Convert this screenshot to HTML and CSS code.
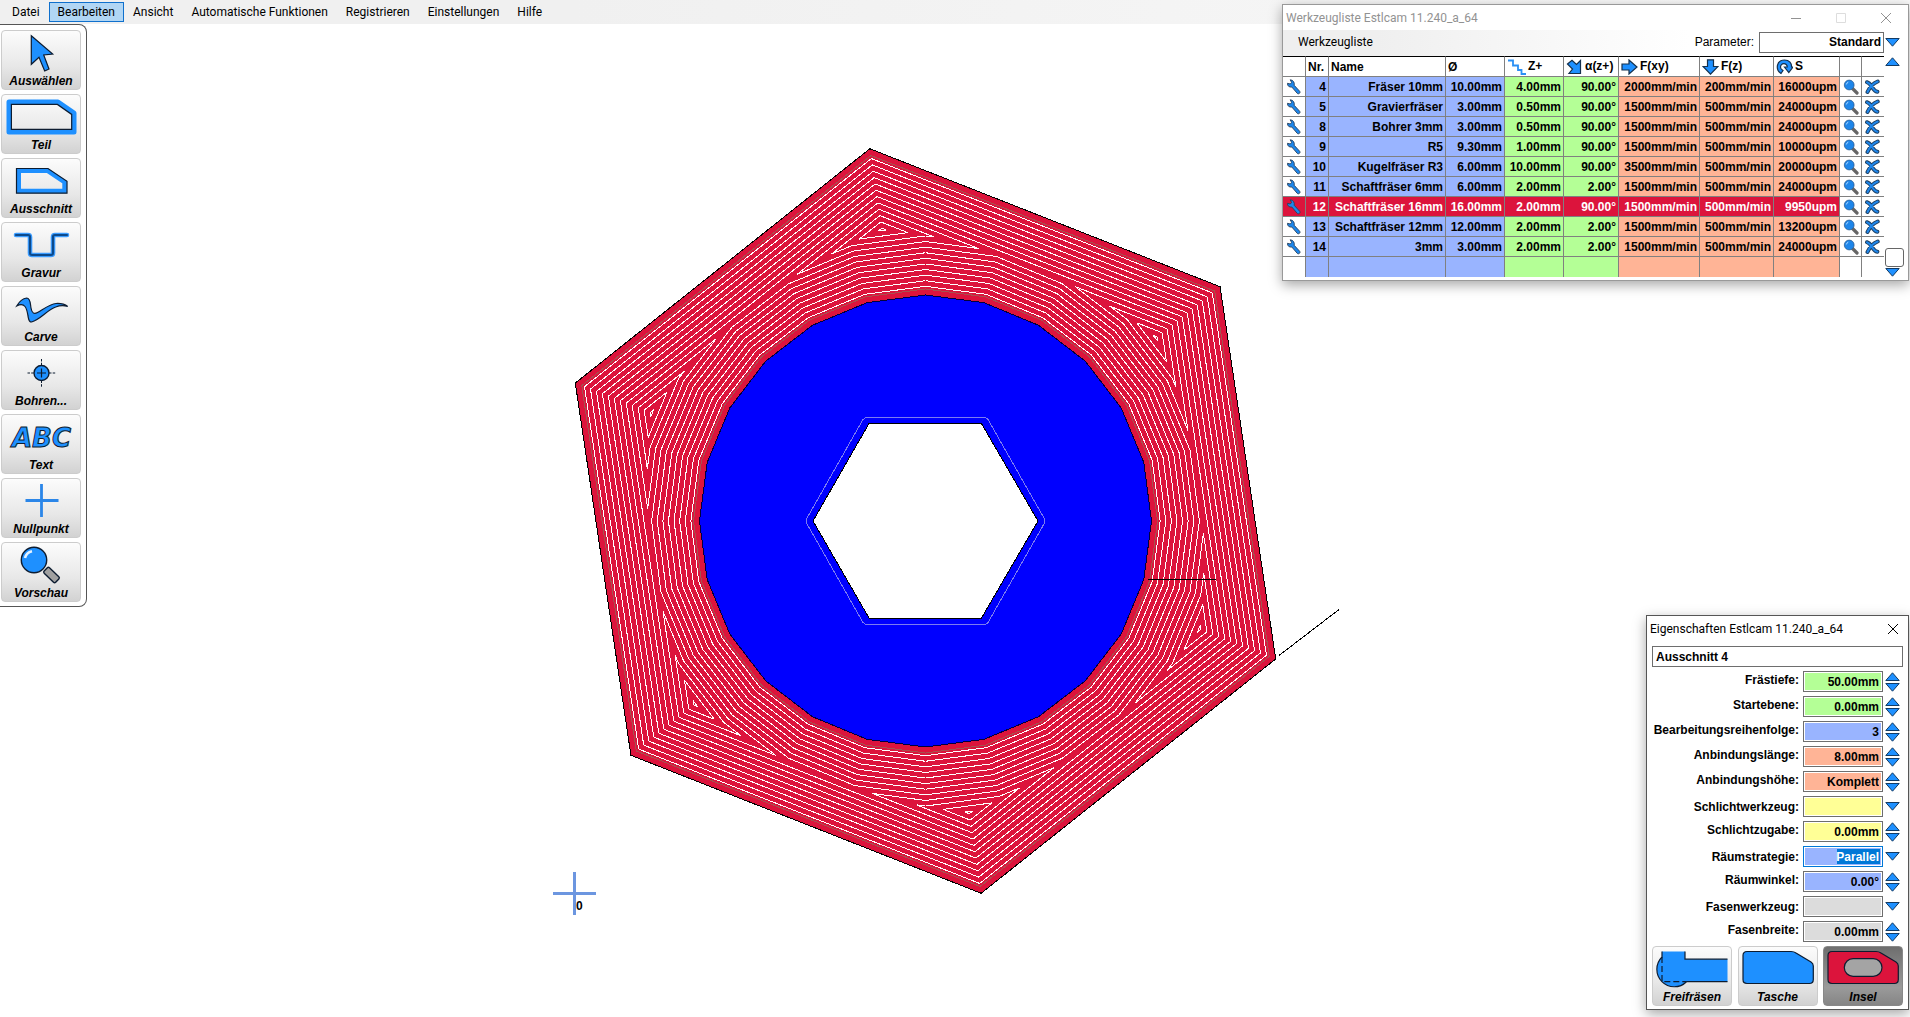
FILE: index.html
```html
<!DOCTYPE html>
<html lang="de">
<head>
<meta charset="utf-8">
<title>Estlcam</title>
<link rel="stylesheet" href="styles.css">
</head>
<body>
<svg class="sprites" aria-hidden="true">
  <symbol id="up" viewBox="0 0 15 9"><path d="M.8 8.5 7.5.8l6.7 7.7z" fill="#1e90ff" stroke="#123a63"/></symbol>
  <symbol id="down" viewBox="0 0 15 9"><path d="M.8.5l6.7 7.7L14.200.5z" fill="#1e90ff" stroke="#123a63"/></symbol>
  <symbol id="wrench" viewBox="0 0 16 16"><path d="M4.200.8 5.600 3.400 4.300 5 1.500 4.300C1.200 6.900 3.400 8.500 5.800 8l5.400 6.300c1.300 1.400 3.700-.4 2.500-2L8.200 6.300C8.800 3.600 7.200.9 4.200.8z" fill="#1e86ea" stroke="#28415c" stroke-width=".9"/></symbol>
  <symbol id="lens" viewBox="0 0 16 16"><path d="M9.500 9.500l4.500 4.500" stroke="#666" stroke-width="3.200" stroke-linecap="round"/><circle cx="6.200" cy="6" r="4.900" fill="#1e86ea" stroke="#2d5f94" stroke-width=".8"/><path d="M3.300 5.500a3 3 0 0 1 2-2.300" fill="none" stroke="#a9d5ff"/></symbol>
  <symbol id="cross" viewBox="0 0 16 16"><g fill="none" stroke-linecap="round"><path d="M2 3.200c2 .6 3 1.800 4.400 3.800 1.500 2.600 3.300 5.400 6 5.800M12.700 2.500C8.700 4 4.700 8 2.500 13" stroke="#1d3d5e" stroke-width="4"/><path d="M2 3.200c2 .6 3 1.800 4.400 3.800 1.500 2.600 3.300 5.400 6 5.800M12.700 2.500C8.700 4 4.700 8 2.500 13" stroke="#1e86ea" stroke-width="2"/></g></symbol>
  <symbol id="steps" viewBox="0 0 20 16"><path d="M1 1.500h5v5h5v4.500h3.500v4H19" fill="none" stroke="#2b90f5" stroke-width="1.800"/></symbol>
  <symbol id="arrow-r" viewBox="0 0 17 16"><path d="M1 5h7V1l8 7-8 7v-4H1z" fill="#1e90ff" stroke="#14304d" stroke-width="1.200"/></symbol>
  <symbol id="arrow-d" viewBox="0 0 17 16"><path d="M5.500.8h6V7.500h4.500l-7.500 7.700L1 7.500h4.500z" fill="#1e90ff" stroke="#14304d" stroke-width="1.200"/></symbol>
  <symbol id="arrow-se" viewBox="0 0 17 16"><path d="M1.500 5 6 1.200l4.500 4.300L14.500 1.500V14.500H3L6.500 10z" fill="#1e90ff" stroke="#14304d" stroke-width="1.200"/></symbol>
  <symbol id="rotate" viewBox="0 0 17 16"><path d="M5 14.500C-1 10.500.5 1 8.500 1c5 0 7.300 3.500 7 7H17l-4.200 5.500L8.500 8h2.800c0-4.500-7-4.500-6.800.3C4.600 10.500 6 11 7 11.500z" fill="#1e90ff" stroke="#14304d" stroke-width="1.200"/></symbol>
</svg>

<nav class="menubar" aria-label="Hauptmenü">
  <button>Datei</button><button class="active">Bearbeiten</button><button>Ansicht</button><button>Automatische Funktionen</button><button>Registrieren</button><button>Einstellungen</button><button>Hilfe</button>
</nav>

<main class="workspace">
  <svg class="drawing" viewBox="0 24 1910 993" preserveAspectRatio="xMinYMin meet" role="img" aria-label="Werkstück mit Fräsbahnen">
    <g id="part" shape-rendering="crispEdges"></g>
    <polygon points="869,423.500 981.500,423.500 1038,521 981.500,618 869,618 813,521" fill="#fff" stroke="#000" shape-rendering="crispEdges"/>
    <polygon points="866,417.500 985.500,417.500 988,419.500 1044.500,519 1044.500,523 988,622.500 985.500,624.500 866,624.500 863,622.500 806.500,523 806.500,519 863,419.500" fill="none" stroke="#7c7cf0" shape-rendering="crispEdges"/>
    <path d="M1148 579.500h68M1279 655.500l60-46" stroke="#000" shape-rendering="crispEdges"/>
    <path d="M553 893.500h43M574.500 872v43" stroke="#6c96e0" stroke-width="3"/>
    <text x="576" y="910" class="origin">0</text>
  </svg>

  <aside class="toolbar" aria-label="Werkzeuge">
    <button class="tool"><svg viewBox="1 1 78 42"><path d="M30.300 5.700 51.700 24l-9 1L48 39l-4.300 2L38 27.300l-7.700 7z" fill="#1e90ff" stroke="#0d1c30" stroke-width="1.200"/></svg><span>Auswählen</span></button>
    <button class="tool"><svg viewBox="1 1 78 42"><path d="M8 8h49l16 11v19H8z" fill="none" stroke="#1e90ff" stroke-width="5" stroke-linejoin="round"/><path d="M10.400 10.400h46l14.300 10v15H10.400z" fill="none" stroke="#0d1c30" stroke-width="1.200"/></svg><span>Teil</span></button>
    <button class="tool"><svg viewBox="1 1 78 42"><path d="M17.700 12.700h28.700l17.200 11.500v8.800H17.700z" fill="none" stroke="#1e90ff" stroke-width="4.600"/><path d="M15.500 10.500H47l19 12.700v12H15.500z" fill="none" stroke="#0d1c30" stroke-width="1.200"/></svg><span>Ausschnitt</span></button>
    <button class="tool"><svg viewBox="1 1 78 42"><g fill="none" stroke-linecap="round"><path d="M15 13h12q2 0 2 2v16q0 2 2 2h19q2 0 2-2V15q0-2 2-2h12" stroke="#3b9cff" stroke-width="4.600"/><path d="M15 13h12q2 0 2 2v16q0 2 2 2h19q2 0 2-2V15q0-2 2-2h12" stroke="#0c4a8c" stroke-width="2.200"/></g></svg><span>Gravur</span></button>
    <button class="tool"><svg viewBox="1 1 78 42"><path d="M15.700 20C18 16 21.500 12.500 25.700 12c4 0 3.500 6 4.300 10 .8 5 3 6.500 6.500 4.500C42 23.500 49 18 55 17.500c5-.3 9 .8 11.700 3-4-1.200-8-1-12 .5C46 24 40 33 30.500 36c-3 0-3-4-3.500-6-.5-3-1-7-3-9.500-2-2.500-5.300-2-8.300-.5z" fill="#1e90ff" stroke="#0d1c30" stroke-width="1.200"/></svg><span>Carve</span></button>
    <button class="tool"><svg viewBox="1 1 78 42"><circle cx="40.500" cy="23" r="7.500" fill="#1e90ff" stroke="#0d1c30" stroke-width="1.400"/><path d="M36 23h9M40.500 18.500v9" stroke="#0d1c30" stroke-width="1.200"/><path d="M26.500 23h6.500M48 23h6.500M40.500 9v6.500M40.500 30.500V37" stroke="#0d1c30" stroke-dasharray="2.500 1.200"/></svg><span>Bohren...</span></button>
    <button class="tool"><svg viewBox="1 1 78 42"><text x="11" y="33" class="abc">ABC</text></svg><span>Text</span></button>
    <button class="tool"><svg viewBox="1 1 78 42"><path d="M24.500 22.500h33M40.500 6v33" stroke="#2b86e8" stroke-width="2.800"/></svg><span>Nullpunkt</span></button>
    <button class="tool"><svg viewBox="1 1 78 42"><circle cx="33" cy="18" r="12.700" fill="#1e90ff" stroke="#0d1c30" stroke-width="1.400"/><path d="M24 16c.8-3.500 3-5.800 7-6.800" fill="none" stroke="#e4f2ff" stroke-width="2.600"/><rect x="42.500" y="29.200" width="16" height="7.600" rx="1.500" transform="rotate(44 50.500 33)" fill="#a0a0a0" stroke="#0d1c30" stroke-width="1.400"/></svg><span>Vorschau</span></button>
  </aside>
</main>

<section class="window tools" aria-label="Werkzeugliste">
  <header class="titlebar inactive">
    <h2>Werkzeugliste Estlcam 11.240_a_64</h2>
    <div class="winbuttons">
      <button aria-label="Minimieren"><svg viewBox="0 0 12 12"><path d="M1 6.500h10" /></svg></button>
      <button aria-label="Maximieren" class="faint"><svg viewBox="0 0 12 12"><path d="M1.500 1.500h9v9h-9z"/></svg></button>
      <button aria-label="Schließen"><svg viewBox="0 0 12 12"><path d="M1 1l10 10M11 1L1 11"/></svg></button>
    </div>
  </header>
  <div class="listbar">
    <button class="listmenu">Werkzeugliste</button>
    <label for="param">Parameter:</label>
    <select id="param"><option>Standard</option></select>
    <svg class="tri"><use href="#down"/></svg>
  </div>
  <div class="listbody">
    <table>
      <colgroup><col class="c23"><col class="c23"><col><col class="c59"><col class="c59"><col class="c55"><col class="c81"><col class="c74"><col class="c66"><col class="c22"><col class="c22"></colgroup>
      <thead><tr><th></th><th>Nr.</th><th>Name</th><th>Ø</th>
        <th><svg class="wide"><use href="#steps"/></svg>Z+</th><th><svg><use href="#arrow-se"/></svg>α(z+)</th><th><svg><use href="#arrow-r"/></svg>F(xy)</th><th><svg><use href="#arrow-d"/></svg>F(z)</th><th><svg><use href="#rotate"/></svg>S</th><th></th><th></th></tr></thead>
      <tbody id="rows"></tbody>
    </table>
    <div class="scroll">
      <button aria-label="Nach oben"><svg class="tri"><use href="#up"/></svg></button>
      <span class="thumb"></span>
      <button aria-label="Nach unten"><svg class="tri"><use href="#down"/></svg></button>
    </div>
  </div>
</section>

<section class="window props" aria-label="Eigenschaften">
  <header class="titlebar">
    <h2>Eigenschaften Estlcam 11.240_a_64</h2>
    <div class="winbuttons"><button aria-label="Schließen"><svg viewBox="0 0 12 12"><path d="M1 1l10 10M11 1L1 11"/></svg></button></div>
  </header>
  <form class="form">
    <input class="name" type="text" value="Ausschnitt 4" aria-label="Name">
    <div class="field"><label for="f1">Frästiefe:</label><input id="f1" class="green" value="50.00mm"><span class="spin"></span></div>
    <div class="field"><label for="f2">Startebene:</label><input id="f2" class="green" value="0.00mm"><span class="spin"></span></div>
    <div class="field"><label for="f3">Bearbeitungsreihenfolge:</label><input id="f3" class="blue" value="3"><span class="spin"></span></div>
    <div class="field"><label for="f4">Anbindungslänge:</label><input id="f4" class="orange" value="8.00mm"><span class="spin"></span></div>
    <div class="field"><label for="f5">Anbindungshöhe:</label><input id="f5" class="orange" value="Komplett"><span class="spin"></span></div>
    <div class="field combo"><label for="f6">Schlichtwerkzeug:</label><select id="f6" class="yellow"><option></option></select><svg class="tri"><use href="#down"/></svg></div>
    <div class="field"><label for="f7">Schlichtzugabe:</label><input id="f7" class="yellow" value="0.00mm"><span class="spin"></span></div>
    <div class="field combo"><label for="f8">Räumstrategie:</label><select id="f8" class="chosen"><option>Parallel</option></select><svg class="tri"><use href="#down"/></svg></div>
    <div class="field"><label for="f9">Räumwinkel:</label><input id="f9" class="blue" value="0.00°"><span class="spin"></span></div>
    <div class="field combo"><label for="f10">Fasenwerkzeug:</label><select id="f10" class="gray"><option></option></select><svg class="tri"><use href="#down"/></svg></div>
    <div class="field"><label for="f11">Fasenbreite:</label><input id="f11" class="gray" value="0.00mm"><span class="spin"></span></div>
    <div class="modes">
      <button type="button" class="tool"><svg viewBox="1 1 78 42"><path d="M10 5.500h23v7.700h42.500v22.500H34.500A17 17 0 1 1 10 11z" fill="#1e90ff"/><path d="M75.500 13.200H33V5.500M10 5.500V11A17 17 0 1 0 34.500 35.700h41" fill="none" stroke="#0d1c30" stroke-width="1.200"/><path d="M10 11v24.700h24" fill="none" stroke="#0d1c30" stroke-width="1.200" stroke-dasharray="6 3"/></svg><span>Freifräsen</span></button>
      <button type="button" class="tool"><svg viewBox="1 1 78 42"><path d="M9 5.500h44q3 0 5 1.500l15 9q2.300 1.500 2.300 4V33.500q0 4-4 4H9q-4 0-4-4v-24q0-4 4-4z" fill="#1e90ff" stroke="#0d1c30" stroke-width="1.200"/></svg><span>Tasche</span></button>
      <button type="button" class="tool pressed"><svg viewBox="1 1 78 42"><path d="M9 5.500h44q3 0 5 1.500l15 9q2.300 1.500 2.300 4V33.500q0 4-4 4H9q-4 0-4-4v-24q0-4 4-4z" fill="#dc143c" stroke="#0d1c30" stroke-width="1.200"/><rect x="21.300" y="12.700" width="37.700" height="17.600" rx="8.800" fill="#a4a4a4" stroke="#0d1c30" stroke-width="1.200"/></svg><span>Insel</span></button>
    </div>
  </form>
</section>
<script src="app.js"></script>
</body>
</html>
```
FILE: styles.css
```css
* { box-sizing: border-box; }
html, body { height: 100%; margin: 0; }
body {
  display: flex;
  flex-direction: column;
  overflow: hidden;
  position: relative;
  background: #fff;
  color: #000;
  font: bold 12px/14px "Liberation Sans", Arial, sans-serif;
}
button {
  margin: 0;
  padding: 0;
  border: 0;
  background: none;
  color: inherit;
  font: inherit;
}
svg { display: block; }
.sprites { position: absolute; width: 0; height: 0; }

.menubar {
  display: flex;
  align-items: center;
  height: 24px;
  padding-left: 3px;
  background: linear-gradient(90deg, #f0f0f0 30%, #f9f9f9);
}
.menubar button {
  height: 20px;
  padding: 0 8px;
  border: 1px solid transparent;
  font: 12px/18px Roboto, "Segoe UI", sans-serif;
}
.menubar .active { background: #b1d6f4; border-color: #0f70cd; }

.workspace { flex: 1; position: relative; min-height: 0; }
.drawing { position: absolute; top: 0; left: 0; width: 100%; height: 100%; }
.origin { font: bold 12px "Liberation Sans", Arial, sans-serif; }

.toolbar {
  position: relative;
  display: flex;
  flex-direction: column;
  gap: 4px;
  width: 87px;
  padding: 5px 5px 4px 1px;
  background: #fff;
  border: 1px solid #555;
  border-left: 0;
  border-radius: 0 8px 8px 0;
}
.tool {
  display: flex;
  flex-direction: column;
  align-items: center;
  width: 80px;
  height: 60px;
  border: 1px solid #ccc;
  border-radius: 4px;
  background: linear-gradient(#fcfcfc, #e8e8e8 60%, #d2d2d2);
  font-style: italic;
  line-height: 16px;
}
.tool svg { width: 78px; height: 42px; }
.abc {
  font: italic bold 26px "DejaVu Sans", sans-serif;
  fill: #1e90ff;
  stroke: #0d1c30;
  stroke-width: 1px;
}
.tool.pressed { background: linear-gradient(#6e6e6e, #9a9a9a 70%, #858585); border-color: #888; }

.window {
  position: absolute;
  right: 1px;
  background: #fff;
  border: 1px solid #999;
  box-shadow: 0 4px 12px rgba(0, 0, 0, .35);
}
.titlebar { display: flex; justify-content: space-between; align-items: center; height: 25px; padding-left: 3px; }
.titlebar h2 { margin: 0; font: 12px/16px Roboto, "Segoe UI", sans-serif; }
.inactive { color: #929292; }
.winbuttons { display: flex; }
.winbuttons button { display: grid; place-items: center; width: 45px; height: 24px; }
.winbuttons svg { width: 12px; height: 12px; fill: none; stroke: currentColor; }
.winbuttons .faint { opacity: .3; }

.tools { top: 4px; width: 627px; padding-bottom: 3px; }
.listbar {
  display: flex;
  align-items: center;
  height: 26px;
  padding: 0 8px 2px 7px;
  background: linear-gradient(90deg, #efefef 15%, #fff 65%);
}
.listmenu { padding: 0 8px; font: 12px/18px Roboto, "Segoe UI", sans-serif; }
.listbar label { margin-left: auto; margin-right: 5px; font-weight: normal; }
.listbar select { width: 125px; height: 21px; margin-right: 1px; padding-right: 2px; }
.tri { width: 15px; height: 9px; flex: none; }

select, input {
  appearance: none;
  margin: 0;
  padding: 1px 3px;
  border: 1px solid #6e6e6e;
  border-radius: 0;
  outline: 0;
  background: #fff;
  box-shadow: inset 0 0 0 1px #fff;
  color: #000;
  font: inherit;
  text-align: right;
  text-align-last: right;
}
.listbody { display: flex; }
table { flex: 1; table-layout: fixed; width: 600px; border-spacing: 0; }
.c22 { width: 22px; }
.c23 { width: 23px; }
.c59 { width: 59px; }
.c55 { width: 55px; }
.c81 { width: 81px; }
.c74 { width: 74px; }
.c66 { width: 66px; }
th, td {
  height: 20px;
  padding: 0 2px 0 0;
  border-right: 1px solid #808080;
  border-bottom: 1px solid #808080;
  text-align: right;
  white-space: nowrap;
}
th { height: 21px; padding: 0 0 0 2px; border-top: 1px solid #000; text-align: left; }
th:last-child, td:last-child { border-right: 0; }
tr:last-child td { border-bottom: 0; }
th svg { display: inline-block; width: 17px; height: 16px; margin-right: 2px; vertical-align: middle; }
th .wide { width: 20px; margin-right: 1px; }
td button { display: block; margin-left: 3px; }
td svg { width: 16px; height: 16px; }
td:nth-child(n+2):nth-child(-n+4) { background: #99b4ff; }
td:nth-child(n+5):nth-child(-n+6) { background: #b4ff96; }
td:nth-child(n+7):nth-child(-n+9) { background: #ffb496; }
.current td:nth-child(-n+9) { background: #dc143c; color: #fff; }
.scroll { display: flex; flex-direction: column; width: 24px; padding: 1px 2px 0 1px; }
.thumb { width: 19px; height: 19px; margin: auto 0 1px; border: 1px solid #666; border-radius: 3px; }

.props { bottom: 7px; width: 263px; border-color: #555; }
.props .winbuttons button { width: 30px; }
.form { display: flex; flex-direction: column; gap: 4px; padding: 5px 5px 3px; }
.name { width: 100%; height: 21px; text-align: left; text-align-last: left; }
.field { display: flex; align-items: center; height: 21px; }
.field label { flex: 1; margin-right: 4px; padding-bottom: 4px; text-align: right; }
.combo label { padding: 0; }
.field input, .field select { width: 80px; height: 21px; margin-right: 2px; }
.combo .tri { margin-right: 3px; }
.green { background: #b4ff96; }
.blue { background: #99b4ff; }
.orange { background: #ffb496; }
.yellow { background: #ffff96; }
.gray { background: #dcdcdc; }
.field .chosen {
  background: linear-gradient(#0078d7, #0078d7) right 2px center / 43px 15px no-repeat #99b4ff;
  border-color: #0078d7;
  color: #fff;
}
.spin { display: flex; flex-direction: column; gap: 2px; margin-right: 3px; }
.modes { display: flex; justify-content: space-between; }
```
FILE: app.js
```js
const tools = [
  ["4", "Fräser 10mm", "10.00mm", "4.00mm", "90.00°", "2000mm/min", "200mm/min", "16000upm"],
  ["5", "Gravierfräser", "3.00mm", "0.50mm", "90.00°", "1500mm/min", "500mm/min", "24000upm"],
  ["8", "Bohrer 3mm", "3.00mm", "0.50mm", "90.00°", "1500mm/min", "500mm/min", "24000upm"],
  ["9", "R5", "9.30mm", "1.00mm", "90.00°", "1500mm/min", "500mm/min", "10000upm"],
  ["10", "Kugelfräser R3", "6.00mm", "10.00mm", "90.00°", "3500mm/min", "500mm/min", "20000upm"],
  ["11", "Schaftfräser 6mm", "6.00mm", "2.00mm", "2.00°", "1500mm/min", "500mm/min", "24000upm"],
  ["12", "Schaftfräser 16mm", "16.00mm", "2.00mm", "90.00°", "1500mm/min", "500mm/min", "9950upm"],
  ["13", "Schaftfräser 12mm", "12.00mm", "2.00mm", "2.00°", "1500mm/min", "500mm/min", "13200upm"],
  ["14", "3mm", "3.00mm", "2.00mm", "2.00°", "1500mm/min", "500mm/min", "24000upm"]
];
const icon = (id, label) => `<td><button aria-label="${label}"><svg><use href="#${id}"/></svg></button></td>`;
document.getElementById("rows").innerHTML = tools.map(t =>
  `<tr class="${t[0] === "12" ? "current" : ""}">${icon("wrench", "Bearbeiten")}${t.map(v => `<td>${v}</td>`).join("")}${icon("lens", "Suchen")}${icon("cross", "Löschen")}</tr>`
).join("") + `<tr>${"<td></td>".repeat(11)}</tr>`;

document.querySelectorAll(".spin").forEach(s => {
  s.innerHTML = '<button type="button" aria-label="Mehr"><svg class="tri"><use href="#up"/></svg></button>' +
    '<button type="button" aria-label="Weniger"><svg class="tri"><use href="#down"/></svg></button>';
});

// Workpiece: hexagonal pocket around a 24-sided island, cleared by parallel offsets.
const cx = 925.5, cy = 521;
const regular = (n, r, start) => Array.from({ length: n }, (_, i) => {
  const a = (start + i * 360 / n) * Math.PI / 180;
  return [cx + r * Math.cos(a), cy + r * Math.sin(a)];
});
const hexagon = d => regular(6, 376.4 - d / Math.cos(Math.PI / 6), -98.5);
const island = d => regular(24, 226 + d / Math.cos(Math.PI / 24), 0);
const pts = p => p.map(q => q.map(v => v.toFixed(2)).join()).join(" ");
const polygon = (p, fill, stroke) => `<polygon points="${pts(p)}" fill="${fill}" stroke="${stroke}"/>`;

// Parameter range of segment a-b that lies inside a convex polygon.
function inside(a, b, poly) {
  let t0 = 0, t1 = 1;
  for (let i = 0; i < poly.length; i++) {
    const p = poly[i], q = poly[(i + 1) % poly.length];
    const nx = -(q[1] - p[1]), ny = q[0] - p[0];
    const da = nx * (a[0] - p[0]) + ny * (a[1] - p[1]);
    const db = nx * (b[0] - p[0]) + ny * (b[1] - p[1]);
    if (da < 0 && db < 0) return null;
    if (da < 0) t0 = Math.max(t0, da / (da - db));
    else if (db < 0) t1 = Math.min(t1, da / (da - db));
  }
  return t0 < t1 ? [t0, t1] : null;
}
function clipped(poly, other, keepInside) {
  let d = "";
  poly.forEach((a, i) => {
    const b = poly[(i + 1) % poly.length], r = inside(a, b, other);
    const parts = keepInside ? (r ? [r] : []) : (r ? [[0, r[0]], [r[1], 1]] : [[0, 1]]);
    for (const [s, e] of parts) {
      if (e - s < 1e-6) continue;
      const at = t => `${(a[0] + (b[0] - a[0]) * t).toFixed(2)} ${(a[1] + (b[1] - a[1]) * t).toFixed(2)}`;
      d += `M${at(s)}L${at(e)}`;
    }
  });
  return d;
}
let art = polygon(hexagon(0), "#dc143c", "#000") + polygon(island(0), "#00f", "#00003c");
art += polygon(hexagon(6), "none", "#a5524f") + polygon(island(6), "none", "#a5524f");
for (let k = 0; k < 12; k++) {
  const d = 8.6 + 5.55 * k, h = hexagon(d), c = island(d);
  art += `<path fill="none" stroke="#fff" d="${clipped(h, c, false)}${clipped(c, h, true)}"/>`;
}
document.getElementById("part").innerHTML = art;
```
